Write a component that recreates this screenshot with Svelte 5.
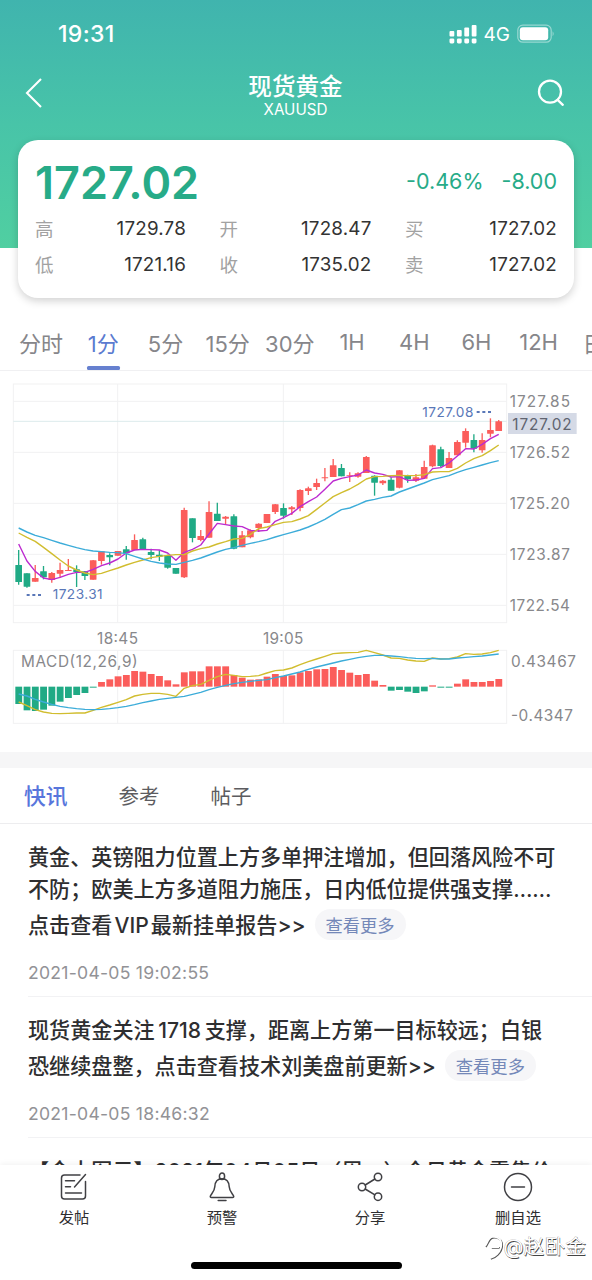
<script lang="ts">
	const quotes = [
		['高', '1729.78'],
		['开', '1728.47'],
		['买', '1727.02'],
		['低', '1721.16'],
		['收', '1735.02'],
		['卖', '1727.02']
	];

	const periods = ['分时', '1分', '5分', '15分', '30分', '1H', '4H', '6H', '12H', '日K'];
	let period = $state('1分');

	const sections = ['快讯', '参考', '帖子'];
	let section = $state('快讯');

	const news = [
		{
			lines: [
				'黄金、英镑阻力位置上方多单押注增加，但回落风险不可',
				'不防；欧美上方多道阻力施压，日内低位提供强支撑……',
				'点击查看 VIP 最新挂单报告>>'
			],
			time: '2021-04-05 19:02:55'
		},
		{
			lines: [
				'现货黄金关注 1718 支撑，距离上方第一目标较远；白银',
				'恐继续盘整，点击查看技术刘美盘前更新>>'
			],
			time: '2021-04-05 18:46:32'
		}
	];

	// chart units: 3 per css pixel
	const step = 24.83;
	const cx = (i: number) => 56 + i * step;

	// wick top, body top, body bottom, wick bottom, rising
	const candles = [
		[510, 555, 606, 614, 0], [580, 580, 620, 623, 0], [555, 594, 605, 605, 1], [558, 574, 592, 598, 0],
		[576, 579, 600, 608, 1], [548, 570, 581, 593, 1], [537, 570, 573, 573, 1], [556, 568, 576, 621, 0],
		[573, 574, 588, 600, 0], [540, 541, 599, 599, 1], [514, 514, 543, 554, 1], [520, 525, 532, 556, 0],
		[513, 513, 527, 527, 1], [498, 508, 520, 539, 0], [463, 480, 510, 510, 1], [473, 478, 507, 507, 0],
		[506, 516, 525, 538, 0], [511, 524, 530, 543, 0], [524, 526, 563, 566, 0], [564, 564, 581, 581, 0],
		[383, 390, 592, 594, 1], [415, 415, 474, 487, 0], [450, 468, 480, 484, 1], [364, 396, 473, 473, 1],
		[368, 401, 423, 423, 0], [408, 410, 416, 432, 1], [403, 409, 506, 508, 0], [453, 466, 502, 502, 1],
		[448, 451, 472, 475, 1], [430, 431, 444, 456, 1], [402, 402, 429, 429, 1], [372, 373, 396, 402, 1],
		[370, 384, 407, 416, 0], [378, 382, 388, 405, 1], [328, 330, 384, 394, 1], [320, 325, 333, 345, 1],
		[296, 309, 321, 330, 1], [264, 292, 295, 304, 1], [237, 256, 291, 291, 1], [252, 264, 289, 289, 0],
		[277, 286, 288, 306, 1], [277, 280, 290, 293, 1], [228, 231, 279, 279, 1], [286, 287, 308, 347, 0],
		[300, 302, 310, 315, 1], [292, 299, 332, 332, 0], [270, 271, 323, 325, 1], [284, 286, 298, 308, 0],
		[282, 292, 302, 306, 1], [242, 261, 296, 296, 1], [194, 196, 259, 262, 1], [200, 208, 258, 262, 0],
		[216, 234, 264, 264, 1], [181, 186, 226, 226, 1], [145, 153, 188, 203, 1], [163, 180, 206, 217, 0],
		[160, 180, 211, 218, 1], [115, 150, 161, 172, 1], [120, 124, 153, 153, 1]
	];

	const ma5 = [
		492, 543, 574, 594, 599, 592, 583, 577, 577, 568, 557, 549, 537, 519, 510, 508, 509, 510, 519, 541,
		517, 508, 495, 462, 430, 434, 438, 440, 451, 453, 451, 424, 413, 400, 380, 365, 351, 328, 303, 295,
		290, 285, 270, 279, 283, 291, 290, 301, 300, 295, 266, 263, 249, 228, 206, 207, 193, 176, 163
	];
	const ma10 = [
		459, 472, 484, 502, 521, 540, 558, 570, 579, 584, 580, 572, 564, 555, 547, 540, 533, 529, 526, 524,
		524, 513, 506, 501, 492, 485, 477, 475, 463, 446, 441, 434, 427, 425, 417, 407, 388, 369, 350, 338,
		327, 313, 297, 290, 289, 287, 286, 287, 287, 284, 276, 275, 275, 265, 249, 236, 227, 212, 195
	];
	const ma20 = [
		444, 456, 466, 473, 481, 489, 496, 503, 509, 513, 515, 517, 518, 521, 529, 537, 544, 549, 552, 553,
		547, 541, 534, 525, 516, 508, 503, 496, 490, 485, 479, 471, 464, 457, 450, 441, 430, 418, 403, 389,
		384, 374, 363, 358, 352, 348, 336, 327, 318, 309, 299, 293, 287, 277, 269, 262, 255, 248, 242
	];

	const macd = [
		192, 211, 213, 209, 197, 185, 174, 165, 159, 143, 126, 118, 109, 105, 93, 95, 102, 108, 121, 133,
		97, 94, 94, 79, 79, 79, 105, 113, 119, 118, 110, 102, 108, 106, 97, 93, 88, 87, 81, 90,
		98, 105, 102, 122, 135, 152, 150, 155, 159, 154, 136, 143, 143, 131, 118, 126, 126, 123, 117
	];
	const dif = [
		186, 197, 209, 216, 220, 221, 220, 219, 219, 211, 202, 195, 187, 179, 168, 163, 160, 160, 163, 169,
		145, 137, 133, 121, 110, 103, 106, 110, 109, 107, 99, 92, 90, 84, 74, 65, 57, 49, 41, 39,
		38, 37, 31, 38, 45, 54, 55, 60, 63, 64, 54, 57, 56, 51, 41, 43, 42, 38, 31
	];
	const dea = [
		162, 168, 178, 186, 193, 199, 203, 206, 208, 209, 208, 206, 203, 199, 194, 188, 183, 178, 175, 172,
		169, 163, 157, 149, 142, 136, 131, 127, 124, 121, 119, 113, 108, 102, 96, 88, 81, 75, 69, 63,
		58, 53, 49, 46, 46, 48, 50, 53, 55, 56, 55, 57, 57, 54, 52, 50, 48, 45, 42
	];

	const points = (ys: number[]) => ys.map((y, i) => `${cx(i)},${y}`).join(' ');

	const prices = [
		[64, '1727.85'],
		[217, '1726.52'],
		[370, '1725.20'],
		[523, '1723.87'],
		[676, '1722.54']
	] as const;
</script>

<div class="app">
	<header>
		<div class="status">
			<span class="clock">19:31</span>
			<svg class="signal" width="28" height="20" viewBox="0 0 28 20" fill="#fff">
				{#each [7, 6, 3.5, 1] as top, i}
					<rect x={i * 7.4 + 0.5} y={top} width="4.8" height={12.4 - top} rx="1" />
					<rect x={i * 7.4 + 0.5} y="14.4" width="4.8" height="5" rx="1.4" />
				{/each}
			</svg>
			<span class="network">4G</span>
			<svg class="battery" width="38" height="20" viewBox="0 0 38 20">
				<rect x="0.8" y="1.2" width="33.4" height="17" rx="5" fill="none" stroke="#fff" stroke-opacity=".45" stroke-width="1.2" />
				<rect x="2.8" y="3.2" width="28.4" height="13" rx="3" fill="#fff" />
				<path d="M35.6 7.2q2 2.5 0 5z" fill="#fff" fill-opacity=".5" />
			</svg>
		</div>

		<nav class="title">
			<svg width="18" height="32" viewBox="0 0 18 32" fill="none" stroke="#fff" stroke-width="2.1">
				<path d="M16 2 2 16l14 14" />
			</svg>
			<div class="name">
				<h1>现货黄金</h1>
				<p>XAUUSD</p>
			</div>
			<svg width="28" height="28" viewBox="0 0 28 28" fill="none" stroke="#fff" stroke-width="2.3" stroke-linecap="round">
				<circle cx="13" cy="12.7" r="11" />
				<path d="m20.6 20.8 5.2 5" />
			</svg>
		</nav>

		<section class="card">
			<div class="price">
				<strong>1727.02</strong>
				<span>-0.46%</span>
				<span class="change">-8.00</span>
			</div>
			<dl>
				{#each quotes as [label, value]}
					<div>
						<dt>{label}</dt>
						<dd>{value}</dd>
					</div>
				{/each}
			</dl>
		</section>
	</header>

	<div class="periods">
		{#each periods as p}
			<button class:active={p === period} onclick={() => (period = p)}>{p}</button>
		{/each}
	</div>

	<svg class="chart" width="592" height="381" viewBox="0 -27 1776 1143">
		<g class="grid">
			<rect x="40" y="12" width="1480" height="716" />
			{#each prices as [y]}
				<path d="M40 {y}H1520" />
			{/each}
			<path d="M353 12V728M850 12V728" />
			<path class="current" d="M40 124H1520" />
		</g>

		{#each candles as [high, top, bottom, low, up], i}
			<g class={up ? 'up' : 'down'}>
				<path d="M{cx(i)} {high}V{low}" stroke-width="4" />
				<rect x={cx(i) - 10} y={top} width="20" height={bottom - top} rx="1" />
			</g>
		{/each}

		<polyline class="line purple" points={points(ma5)} />
		<polyline class="line yellow" points={points(ma10)} />
		<polyline class="line blue" points={points(ma20)} />

		<g class="mark">
			<path d="M80 645h44M1430 96h44" />
			<text x="158" y="657" textLength="150">1723.31</text>
			<text x="1267" y="111" textLength="153">1727.08</text>
		</g>

		<rect x="1524" y="99" width="206" height="63" fill="#d5dae6" />
		<g class="axis">
			{#each prices as [y, label]}
				<text x="1529" y={y + 16} textLength="181">{label}</text>
			{/each}
			<text class="now" x="1537" y="149" textLength="178">1727.02</text>
			<text x="291" y="792" textLength="123">18:45</text>
			<text x="789" y="792" textLength="121">19:05</text>
		</g>

		<g transform="translate(0 780)">
			<g class="grid">
				<rect x="40" y="31" width="1480" height="219" />
				<path d="M353 31V250M850 31V250" />
			</g>
			{#each macd as y, i}
				<rect
					class={y < 140 ? 'up' : 'down'}
					x={cx(i) - 10}
					y={Math.min(y, 140)}
					width="20.5"
					height={Math.abs(y - 140)}
				/>
			{/each}
			<polyline class="line yellow" points={points(dif)} />
			<polyline class="line blue" points={points(dea)} />
			<g class="axis">
				<text x="63" y="81" textLength="350">MACD(12,26,9)</text>
				<text x="1533" y="80" textLength="195">0.43467</text>
				<text x="1533" y="243" textLength="186">-0.4347</text>
			</g>
		</g>
	</svg>

	<div class="sections">
		{#each sections as s}
			<button class:active={s === section} onclick={() => (section = s)}>{s}</button>
		{/each}
	</div>

	<main>
		{#each news as item}
			<article>
				{#each item.lines as line, i}
					<p class:last={i === item.lines.length - 1}>
						{line}
						{#if i === item.lines.length - 1}
							<button>查看更多</button>
						{/if}
					</p>
				{/each}
				<time>{item.time}</time>
			</article>
		{/each}
		<article class="cut">
			<p>【金十图示】2021年04月05日（周一）今日黄金零售价</p>
		</article>
	</main>

	<footer>
		<div class="actions">
			<button>
				<svg viewBox="0 0 30 30">
					<path d="M21 3H5.5Q2.5 3 2.5 6v18q0 3 3 3h18q3 0 3-3V9.5" />
					<path d="M15.5 15 26.5 2.5M6.5 8.7h9M6.5 14.7h5M6.5 21h16" />
				</svg>
				发帖
			</button>
			<button>
				<svg viewBox="0 0 30 30">
					<ellipse cx="15" cy="4.2" rx="2.6" ry="3.2" />
					<path d="M15 6.8c-5 0-7 3.6-7.2 8-.2 4.6-3.5 7-4.4 9.2-.4 1 .1 1.4 1 1.4h21.2c.9 0 1.4-.4 1-1.4-.9-2.2-4.2-4.6-4.4-9.2-.2-4.4-2.2-8-7.2-8z" />
					<path d="M11.2 28.4h7.8" />
				</svg>
				预警
			</button>
			<button>
				<svg viewBox="0 0 30 30">
					<circle cx="7" cy="15" r="3.7" />
					<circle cx="23" cy="5" r="3.7" />
					<circle cx="23" cy="24.7" r="3.7" />
					<path d="m10.2 13 9.7-6M10.2 17l9.7 5.8" />
				</svg>
				分享
			</button>
			<button>
				<svg viewBox="0 0 30 30">
					<circle cx="15" cy="15" r="13.5" />
					<path d="M8.5 15h13" />
				</svg>
				删自选
			</button>
		</div>
		<div class="home"></div>
		<div class="watermark">
			<svg width="20" height="26" viewBox="0 0 20 26" fill="none" stroke-width="1.8">
				<g stroke="#555" transform="translate(.8 .8)">
					<path d="M1 12C3 10 4 4 8 3s8 1 9 5-1 9-4 12-4 3-7 4M7 13h8" />
				</g>
				<path d="M1 12C3 10 4 4 8 3s8 1 9 5-1 9-4 12-4 3-7 4M7 13h8" stroke="#fff" />
			</svg>
			<span>@赵卧金</span>
		</div>
	</footer>
</div>

<style>
	:global(body) {
		margin: 0;
		background: #fff;
	}

	.app {
		position: relative;
		width: 592px;
		height: 1280px;
		overflow: hidden;
		background: #fff;
		color: #2e2e30;
		font-family: Inter, 'Noto Sans CJK SC', sans-serif;
		display: flex;
		flex-direction: column;
	}

	button {
		border: 0;
		padding: 0;
		background: none;
		font: inherit;
		color: inherit;
		white-space: nowrap;
	}

	h1,
	p,
	dl,
	dd {
		margin: 0;
	}

	header {
		flex: none;
		height: 248px;
		margin-bottom: 67px;
		background: linear-gradient(#40b4ae, #48c4a8 50%, #50cfa1);
		color: #fff;
	}

	.status {
		display: flex;
		align-items: center;
		height: 68px;
		padding: 0 37px 0 58px;
	}

	.clock {
		flex: 1;
		font-size: 23px;
		font-weight: 500;
		letter-spacing: 0.3px;
	}

	.network {
		margin: 0 7px 0 7px;
		font-size: 19px;
		font-weight: 400;
	}

	.title {
		display: flex;
		align-items: center;
		justify-content: space-between;
		height: 50px;
		padding: 0 27px 0 25px;
	}

	.name {
		text-align: center;
		padding: 6px 0 0 11px;
	}

	h1 {
		font-size: 23.6px;
		line-height: 28px;
		font-weight: 500;
	}

	.name p {
		font-size: 15.2px;
		line-height: 18px;
	}

	.card {
		margin: 22px 18px 0;
		height: 158px;
		box-sizing: border-box;
		padding: 21px 17px 0;
		border-radius: 20px;
		background: #fff;
		box-shadow: 0 3px 9px rgb(0 0 0 / 0.18);
	}

	.price {
		display: flex;
		align-items: center;
		height: 42px;
		color: #27ab88;
		font-size: 21.5px;
	}

	.price strong {
		flex: 1;
		font-size: 45px;
		font-weight: 600;
		letter-spacing: 0;
	}

	.price span {
		position: relative;
		top: -1px;
	}

	.price .change {
		margin-left: 18px;
	}

	dl {
		display: grid;
		grid-template-columns: 151px 152px 152px;
		column-gap: 33.5px;
		padding-top: 7px;
	}

	dl div {
		display: flex;
		justify-content: space-between;
		align-items: center;
		height: 36px;
	}

	dt {
		font-size: 18.5px;
		font-weight: 400;
		color: #a2a2a2;
	}

	dd {
		font-size: 18.8px;
		letter-spacing: 0.2px;
		color: #333;
	}

	.periods {
		flex: none;
		display: flex;
		height: 55px;
		padding-left: 10px;
		border-bottom: 1px solid #f0f0f2;
		color: #86868a;
		font-size: 22px;
	}

	.periods button {
		position: relative;
		flex: none;
		width: 62.2px;
		padding-bottom: 2px;
	}

	.periods .active {
		color: #5b7bd0;
	}

	.periods .active::after {
		content: '';
		position: absolute;
		bottom: 0;
		left: 15px;
		width: 33px;
		height: 4.5px;
		border-radius: 1.5px;
		background: #6680cf;
	}

	.chart {
		flex: none;
	}

	.grid {
		fill: none;
		stroke: #f1f1f2;
		stroke-width: 3;
	}

	.grid .current {
		stroke: #dcebec;
	}

	.up {
		fill: #fb5d5b;
		stroke: #fb5d5b;
	}

	.down {
		fill: #20aa85;
		stroke: #20aa85;
	}

	.up rect,
	.down rect,
	rect.up,
	rect.down {
		stroke: none;
	}

	.line {
		fill: none;
		stroke-width: 4.2;
		stroke-linejoin: round;
	}

	.purple {
		stroke: #bd2bd0;
	}

	.yellow {
		stroke: #d1bd2f;
	}

	.blue {
		stroke: #3cacd9;
	}

	.mark text {
		fill: #5977b8;
		font-size: 41px;
	}

	.mark path {
		stroke: #5977b8;
		stroke-width: 6;
		stroke-dasharray: 9 8;
	}

	.axis {
		fill: #88888b;
		font-size: 46px;
	}

	.axis .now {
		fill: #606470;
	}

	.sections {
		flex: none;
		display: flex;
		gap: 51px;
		height: 55px;
		padding-left: 24px;
		border-top: 16px solid #f6f6f7;
		border-bottom: 1px solid #ededef;
		color: #5c5c60;
		font-size: 20.5px;
	}

	.sections button {
		padding-bottom: 2px;
	}

	.sections .active {
		color: #5876dc;
		font-size: 21.8px;
		font-weight: 500;
	}

	main {
		padding-left: 28px;
	}

	article {
		padding: 16px 0 11px;
		border-bottom: 1px solid #f2f2f4;
	}

	article p {
		display: flex;
		align-items: center;
		height: 32px;
		font-size: 21.1px;
		font-weight: 500;
		word-spacing: -2px;
		white-space: nowrap;
	}

	article p.last {
		height: 40px;
		word-spacing: -3.5px;
	}

	article button {
		margin-left: 9px;
		width: 91px;
		height: 31px;
		border-radius: 16px;
		background: #f6f6f8;
		color: #7488b8;
		font-size: 17.3px;
		font-weight: 400;
	}

	time {
		display: block;
		margin-top: 17px;
		font-size: 17.6px;
		letter-spacing: 0.25px;
		line-height: 24px;
		color: #929296;
	}

	.cut {
		border: 0;
		padding-top: 16px;
	}

	footer {
		position: absolute;
		left: 0;
		right: 0;
		bottom: 0;
		height: 115px;
		background: #fff;
		box-shadow: 0 -1px 6px rgb(0 0 0 / 0.06);
	}

	.actions {
		display: flex;
		height: 97px;
	}

	.actions button {
		flex: 1;
		display: flex;
		flex-direction: column;
		align-items: center;
		padding-top: 7px;
		gap: 5px;
		font-size: 15.3px;
		line-height: 21px;
	}

	.actions svg {
		width: 30px;
		height: 30px;
		fill: none;
		stroke: #404044;
		stroke-width: 1.5;
		stroke-linecap: round;
	}

	.home {
		width: 211px;
		height: 7px;
		margin: 0 auto;
		border-radius: 4px;
		background: #000;
	}

	.watermark {
		position: absolute;
		right: 6px;
		top: 68px;
		display: flex;
		align-items: center;
		color: #fff;
		font-size: 20.8px;
		line-height: 28px;
		text-shadow: 0.7px 0.7px 0.6px #444, -0.3px -0.3px 0.5px #888;
	}
</style>
